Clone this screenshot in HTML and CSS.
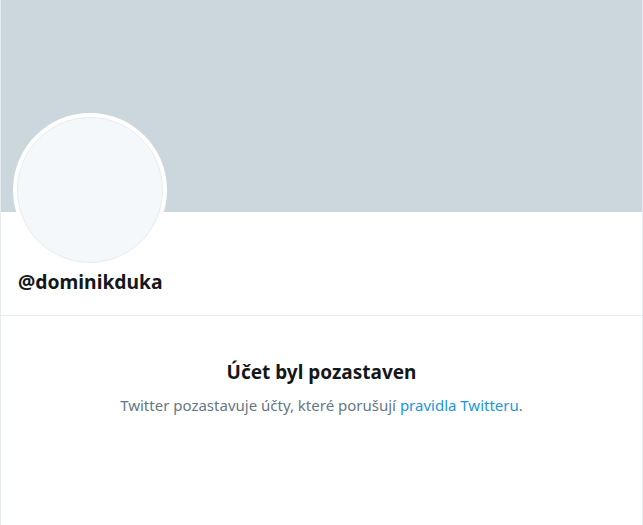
FILE: index.html
```html
<!DOCTYPE html>
<html lang="cs">
<head>
<meta charset="utf-8">
<title>@dominikduka</title>
<link rel="stylesheet" href="styles.css">
</head>
<body>
<div class="page">
  <div class="banner"></div>
  <div class="profile">
    <div class="avatar"><div class="avatar-inner"></div></div>
    <div class="handle">@dominikduka</div>
  </div>
  <div class="notice">
    <div class="notice-title">Účet byl pozastaven</div>
    <div class="notice-text">Twitter pozastavuje účty, které porušují <a class="link" href="#">pravidla Twitteru</a>.</div>
  </div>
</div>
</body>
</html>
```

FILE: styles.css
```css
html, body {
  margin: 0;
  padding: 0;
  background: #ffffff;
}
body {
  font-family: "Noto Sans", "Open Sans", sans-serif;
}
.page {
  width: 641px;
  min-height: 525px;
  border-left: 1px solid #e6ecf0;
  border-right: 1px solid #e6ecf0;
  box-sizing: content-box;
}
.banner {
  height: 212px;
  background: #ccd6dd;
}
.profile {
  display: flex;
  flex-direction: column;
  align-items: flex-start;
  padding: 0 16px 0 12px;
  border-bottom: 1px solid #e6ecf0;
  height: 103px;
}
.avatar {
  flex: none;
  width: 154px;
  height: 154px;
  border-radius: 50%;
  background: #ffffff;
  margin-top: -99px;
  padding: 4px;
  box-sizing: border-box;
}
.avatar-inner {
  width: 100%;
  height: 100%;
  border-radius: 50%;
  background: #f5f8fa;
  border: 1px solid #e6ecf0;
  box-sizing: border-box;
}
.handle {
  margin-top: 3px;
  padding-left: 5px;
  font-size: 19.3px;
  font-weight: 700;
  color: #14171a;
  line-height: 24px;
}
.notice {
  padding-top: 43px;
  text-align: center;
}
.notice-title {
  font-size: 19px;
  font-weight: 700;
  color: #14171a;
  line-height: 26px;
}
.notice-text {
  margin-top: 10px;
  font-size: 15px;
  color: #657786;
  line-height: 20px;
}
.link {
  color: #1b95e0;
  text-decoration: none;
}
```
